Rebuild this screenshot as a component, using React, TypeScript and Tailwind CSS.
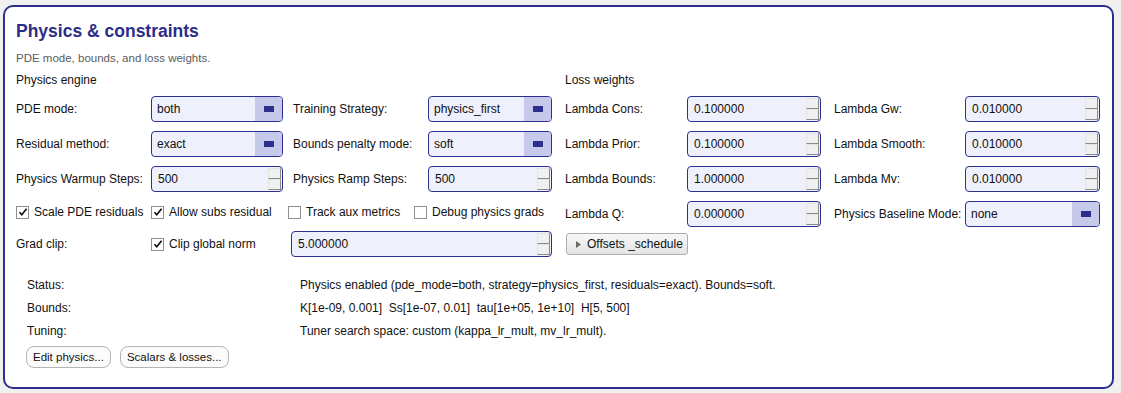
const FONT = "font-['Liberation_Sans',Arial,sans-serif]";

function Combo({ value, className }: { value: string; className: string }) {
  return (
    <div
      className={`flex h-[26px] items-stretch overflow-hidden rounded-[4px] border border-[#2d2f8f] bg-[#eef0fb] ${className}`}
    >
      <span className="flex-1 truncate pl-[5px] leading-[24px]">{value}</span>
      <span className="flex w-[27px] items-center justify-center bg-[#c6c9e9]">
        <span className="h-[6px] w-[10px] bg-[#2d2f8f]" />
      </span>
    </div>
  );
}

function Spin({ value, className }: { value: string; className: string }) {
  return (
    <div
      className={`flex h-[26px] items-stretch rounded-[4px] border border-[#2d2f8f] bg-[#eef0fb] ${className}`}
    >
      <span className="flex-1 pl-[6px] leading-[24px]">{value}</span>
      <span className="flex w-[14px] flex-col justify-center pr-[1px]">
        <span className="h-[11px] border border-t-[#e4e4e4] border-l-[#e4e4e4] border-r-[#8a8a8a] border-b-[#8a8a8a] bg-[#f0f0f0]" />
        <span className="h-[11px] border border-t-[#e4e4e4] border-l-[#e4e4e4] border-r-[#8a8a8a] border-b-[#8a8a8a] bg-[#f0f0f0]" />
      </span>
    </div>
  );
}

function Check({ label, checked, className }: { label: string; checked?: boolean; className: string }) {
  return (
    <div className={`flex items-center ${className}`}>
      <span className="flex h-[13px] w-[13px] items-center justify-center border border-[#8f8f8f] bg-white">
        {checked && (
          <svg width="10" height="10" viewBox="0 0 10 10">
            <path d="M1.5 5.2 L3.8 7.8 L8.6 1.8" fill="none" stroke="#111" strokeWidth="1.7" />
          </svg>
        )}
      </span>
      <span className="ml-[5px] whitespace-nowrap">{label}</span>
    </div>
  );
}

function Row({ children }: { children: React.ReactNode }) {
  return <div className="flex h-[26px] items-center">{children}</div>;
}

export default function App() {
  return (
    <div className={`h-[393px] w-[1121px] bg-[#f0f0f0] pt-[5px] pr-[7px] pb-[4px] pl-[3px] ${FONT} text-[12px] text-[#111]`}>
      <div className="flex h-full flex-col rounded-[10px] border-2 border-[#2d2f8f] bg-white pl-[11px] pt-[10px]">
        <h1 className="h-[28px] text-[17.5px] font-bold leading-[28px] text-[#2b2d86]">Physics &amp; constraints</h1>
        <p className="mt-[5px] h-[16px] text-[11.5px] leading-[16px] text-[#5c5c5c]">PDE mode, bounds, and loss weights.</p>

        <div className="mt-[4px] flex">
          {/* physics engine */}
          <div className="flex w-[549px] flex-col">
            <div className="h-[20px] leading-[20px]">Physics engine</div>
            <div className="mt-[6px] flex flex-col gap-[9px]">
              <Row>
                <span className="w-[135px]">PDE mode:</span>
                <Combo value="both" className="w-[132px]" />
                <span className="ml-[10px] w-[135px]">Training Strategy:</span>
                <Combo value="physics_first" className="w-[124px]" />
              </Row>
              <Row>
                <span className="w-[135px]">Residual method:</span>
                <Combo value="exact" className="w-[132px]" />
                <span className="ml-[10px] w-[135px]">Bounds penalty mode:</span>
                <Combo value="soft" className="w-[124px]" />
              </Row>
              <Row>
                <span className="w-[135px]">Physics Warmup Steps:</span>
                <Spin value="500" className="w-[132px]" />
                <span className="ml-[10px] w-[135px]">Physics Ramp Steps:</span>
                <Spin value="500" className="w-[124px]" />
              </Row>
              <div className="-mt-[2px]">
                <Row>
                  <Check label="Scale PDE residuals" checked className="w-[135px]" />
                  <Check label="Allow subs residual" checked className="w-[137px]" />
                  <Check label="Track aux metrics" className="w-[126px]" />
                  <Check label="Debug physics grads" className="flex-1" />
                </Row>
              </div>
            </div>
            <div className="mt-[6px]">
              <Row>
                <span className="w-[135px]">Grad clip:</span>
                <Check label="Clip global norm" checked className="w-[140px]" />
                <Spin value="5.000000" className="w-[261px]" />
              </Row>
            </div>
          </div>

          {/* loss weights */}
          <div className="flex w-[535px] flex-col">
            <div className="h-[20px] leading-[20px]">Loss weights</div>
            <div className="mt-[6px] flex flex-col gap-[9px]">
              <Row>
                <span className="w-[122px]">Lambda Cons:</span>
                <Spin value="0.100000" className="w-[134px]" />
                <span className="ml-[13px] w-[131px]">Lambda Gw:</span>
                <Spin value="0.010000" className="w-[135px]" />
              </Row>
              <Row>
                <span className="w-[122px]">Lambda Prior:</span>
                <Spin value="0.100000" className="w-[134px]" />
                <span className="ml-[13px] w-[131px]">Lambda Smooth:</span>
                <Spin value="0.010000" className="w-[135px]" />
              </Row>
              <Row>
                <span className="w-[122px]">Lambda Bounds:</span>
                <Spin value="1.000000" className="w-[134px]" />
                <span className="ml-[13px] w-[131px]">Lambda Mv:</span>
                <Spin value="0.010000" className="w-[135px]" />
              </Row>
              <Row>
                <span className="w-[122px]">Lambda Q:</span>
                <Spin value="0.000000" className="w-[134px]" />
                <span className="ml-[13px] w-[131px]">Physics Baseline Mode:</span>
                <Combo value="none" className="w-[135px]" />
              </Row>
            </div>
            <div className="mt-[4px]">
              <Row>
                <button className="ml-[1px] flex h-[22px] w-[122px] items-center rounded-[3px] border border-[#adadad] bg-gradient-to-b from-[#f7f7f7] to-[#e4e4e4] pl-[9px]">
                  <svg width="5" height="7" viewBox="0 0 5 7">
                    <path d="M0 0 L5 3.5 L0 7 Z" fill="#6a6a6a" />
                  </svg>
                  <span className="ml-[6px]">Offsets _schedule</span>
                </button>
              </Row>
            </div>
          </div>
        </div>

        {/* summary */}
        <div className="mt-[17px] pl-[11px] text-[12px]">
          <div className="grid grid-cols-[273px_1fr]">
            <span className="h-[23px] leading-[23px]">Status:</span>
            <span className="h-[23px] leading-[23px]">
              Physics enabled (pde_mode=both, strategy=physics_first, residuals=exact). Bounds=soft.
            </span>
            <span className="h-[23px] leading-[23px]">Bounds:</span>
            <span className="h-[23px] whitespace-pre leading-[23px]">
              {"K[1e-09, 0.001]  Ss[1e-07, 0.01]  tau[1e+05, 1e+10]  H[5, 500]"}
            </span>
            <span className="h-[23px] leading-[23px]">Tuning:</span>
            <span className="h-[23px] leading-[23px]">Tuner search space: custom (kappa_lr_mult, mv_lr_mult).</span>
          </div>
          <div className="mt-[3px] flex gap-[9px] text-[11.5px]">
            <button className="-ml-[1px] h-[22px] rounded-[8px] border border-[#b4b4b4] bg-[#fbfbfb] px-[6px] leading-[20px]">
              Edit physics...
            </button>
            <button className="h-[22px] rounded-[8px] border border-[#b4b4b4] bg-[#fbfbfb] px-[6px] leading-[20px]">
              Scalars &amp; losses...
            </button>
          </div>
        </div>
      </div>
    </div>
  );
}
